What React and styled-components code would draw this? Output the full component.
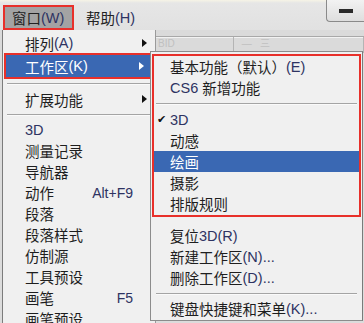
import styled, { createGlobalStyle } from 'styled-components'

const GlobalStyle = createGlobalStyle`
  body {
    margin: 0;
    font-family: 'Liberation Sans', 'Noto Sans CJK SC', sans-serif;
  }
`

const Screen = styled.div`
  position: relative;
  width: 364px;
  height: 323px;
  overflow: hidden;
  background: #dcdcdc;
`

const MenuBar = styled.div`
  display: flex;
  align-items: flex-start;
  height: 30px;
  padding-left: 3px;
  box-sizing: border-box;
  background: linear-gradient(#f6f4e6 0, #e6e6e6 3px, #e1e1e1 100%);
`

const MenuTitle = styled.div`
  margin-top: 5px;
  height: 25px;
  padding: 0 ${p => (p.$active ? '7px' : '10px')};
  display: flex;
  align-items: center;
  white-space: nowrap;
  font-size: 14.5px;
  color: #222;
  box-sizing: border-box;
  background: ${p => (p.$active ? '#a3a3a3' : 'transparent')};
  border: ${p => (p.$active ? '2px solid #e8302a' : 'none')};
  min-width: ${p => (p.$active ? '71px' : '0')};
  margin-right: ${p => (p.$active ? '2px' : '0')};
`

const MinButton = styled.div`
  margin-left: auto;
  width: 38px;
  height: 22px;
  box-sizing: border-box;
  border: 1px solid #8a8a8a;
  border-top: none;
  border-right: none;
  border-bottom-left-radius: 4px;
  background: linear-gradient(#f2f2f2, #dedede);
  display: flex;
  align-items: center;
  justify-content: center;

  &::after {
    content: '';
    width: 14px;
    height: 4px;
    background: #2a2a2a;
  }
`

const PanelStrip = styled.div`
  height: 22px;
  box-sizing: border-box;
  padding-top: 6px;
  background: #dadada;
`

const PanelTabs = styled.div`
  display: flex;
  height: 16px;
  border-top: 1px solid #a8a8a8;
  box-shadow: inset 0 1px 0 #f2f2f2;
  margin-left: 150px;
`

const PanelTab = styled.div`
  width: ${p => p.$w}px;
  border-right: 1px solid #b4b4b4;
  font-size: 10px;
  color: #c0c0c0;
  padding-left: 8px;
  line-height: 14px;
`

const Menu = styled.div`
  position: absolute;
  box-sizing: border-box;
  background: #f0f0f0;
  font-size: 14.5px;
  color: #1e1e1e;
`

const MainMenu = styled(Menu)`
  top: 30px;
  left: 2px;
  width: 154px;
  height: 300px;
  padding-top: 2px;
  border-left: 1px solid #7c7c7c;
  border-right: 1px solid #9a9a9a;
`

const SubMenu = styled(Menu)`
  top: 51px;
  left: 150px;
  width: 213px;
  height: 270px;
  padding: 2px 1px 0 1px;
  border: 1px solid #8c8c8c;
  border-right-color: #7a7a7a;
`

const RedFrame = styled.div`
  border: 2px solid #e8302a;
  padding-bottom: 1px;
  margin-bottom: 8px;
`

const Item = styled.div`
  position: relative;
  display: flex;
  align-items: center;
  height: ${p => p.$h || 21}px;
  padding-left: ${p => p.$indent}px;
  padding-right: 8px;
  white-space: nowrap;
  background: ${p => (p.$hl ? '#3a68b3' : 'transparent')};
  color: ${p => (p.$hl ? '#fff' : 'inherit')};
  box-shadow: ${p => (p.$frame ? '0 0 0 2px #e8302a' : 'none')};
  margin: ${p => (p.$frame ? '1px 3px 1px 3px' : '0')};
`

const Latin = styled.span`
  color: ${p => (p.$light ? '#fff' : '#2e3362')};
`

const Shortcut = styled.span`
  margin-left: auto;
  margin-right: 14px;
  font-size: 14px;
  color: #2e3362;
`

const Arrow = styled.span`
  margin-left: auto;
  width: 0;
  height: 0;
  border-top: 4px solid transparent;
  border-bottom: 4px solid transparent;
  border-left: 5px solid ${p => (p.$light ? '#fff' : '#111')};
`

const Check = styled.span`
  position: absolute;
  left: 3px;
  font-size: 11px;
  color: #111;
`

const Separator = styled.div`
  height: ${p => p.$h}px;
  display: flex;
  align-items: center;
  padding: 0 ${p => p.$side || 4}px;

  &::after {
    content: '';
    flex: 1;
    height: 1px;
    background: #a4a4a4;
    box-shadow: 0 1px 0 #fafafa;
  }
`

const lowerItems = [
  ['测量记录'],
  ['导航器'],
  ['动作', 'Alt+F9'],
  ['段落'],
  ['段落样式'],
  ['仿制源'],
  ['工具预设'],
  ['画笔', 'F5'],
  ['画笔预设'],
]

export default function App() {
  return (
    <Screen>
      <GlobalStyle />
      <MenuBar>
        <MenuTitle $active>
          窗口<Latin>(W)</Latin>
        </MenuTitle>
        <MenuTitle>
          帮助<Latin>(H)</Latin>
        </MenuTitle>
        <MinButton />
      </MenuBar>
      <PanelStrip>
        <PanelTabs>
          <PanelTab $w={80}>BID</PanelTab>
          <PanelTab $w={130}>— &nbsp; 三</PanelTab>
        </PanelTabs>
      </PanelStrip>

      <MainMenu>
        <Item $indent={22} $h={22}>
          排列<Latin>(A)</Latin>
          <Arrow />
        </Item>
        <Item $indent={19} $h={22} $hl $frame>
          工作区<Latin $light>(K)</Latin>
          <Arrow $light />
        </Item>
        <Separator $h={10} />
        <Item $indent={22} $h={22}>
          扩展功能
          <Arrow />
        </Item>
        <Separator $h={9} />
        <Item $indent={22}>
          <Latin>3D</Latin>
        </Item>
        {lowerItems.map(([label, key]) => (
          <Item key={label} $indent={22}>
            {label}
            {key && <Shortcut>{key}</Shortcut>}
          </Item>
        ))}
      </MainMenu>

      <SubMenu>
        <RedFrame>
          <Item $indent={16}>
            基本功能（默认）<Latin>(E)</Latin>
          </Item>
          <Item $indent={16}>
            <Latin>CS6</Latin>&nbsp;新增功能
          </Item>
          <Separator $h={11} $side={2} />
          <Item $indent={16}>
            <Check>✔</Check>
            <Latin>3D</Latin>
          </Item>
          <Item $indent={16}>动感</Item>
          <Item $indent={16} $hl>
            绘画
          </Item>
          <Item $indent={16}>摄影</Item>
          <Item $indent={16}>排版规则</Item>
        </RedFrame>
        <Item $indent={18}>
          复位<Latin>3D(R)</Latin>
        </Item>
        <Item $indent={18}>
          新建工作区<Latin>(N)...</Latin>
        </Item>
        <Item $indent={18}>
          删除工作区<Latin>(D)...</Latin>
        </Item>
        <Separator $h={10} $side={4} />
        <Item $indent={18}>
          键盘快捷键和菜单<Latin>(K)...</Latin>
        </Item>
      </SubMenu>
    </Screen>
  )
}
